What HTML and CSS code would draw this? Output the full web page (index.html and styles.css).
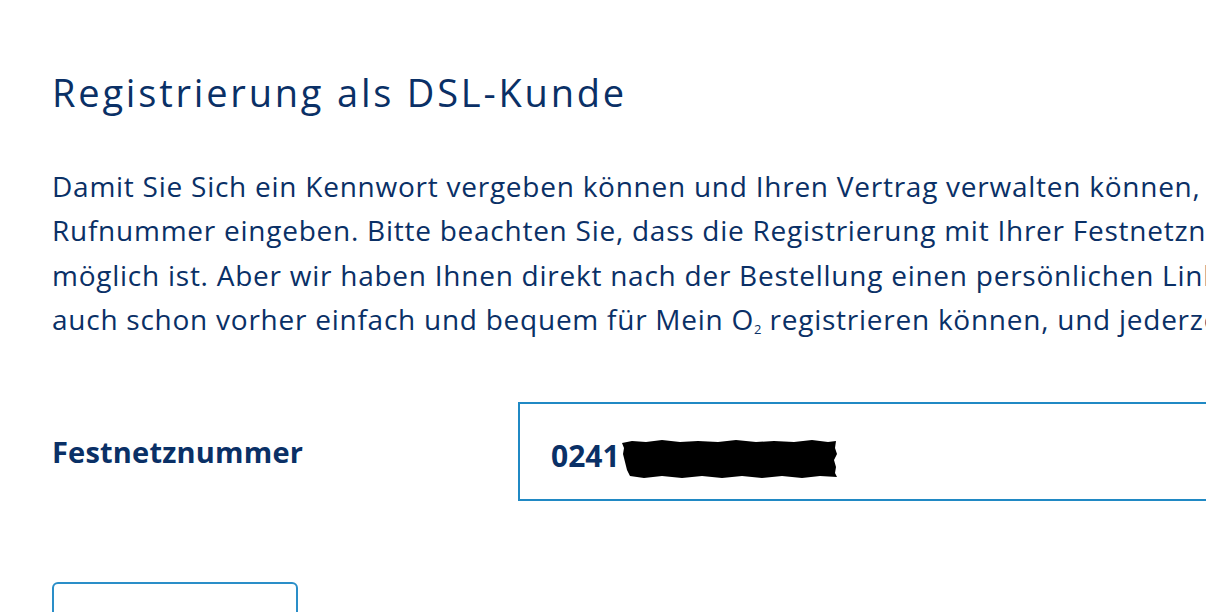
FILE: index.html
```html
<!DOCTYPE html>
<html lang="de">
<head>
    <meta charset="UTF-8">
    <title>Registrierung als DSL-Kunde</title>
    <link rel="stylesheet" href="styles.css">
</head>
<body>
    <div class="register">
        <h1>Registrierung als DSL-Kunde</h1>
        <p class="intro">
            <span class="line">Damit Sie Sich ein Kennwort vergeben können und Ihren Vertrag verwalten können,</span>
            <span class="line">Rufnummer eingeben. Bitte beachten Sie, dass die Registrierung mit Ihrer Festnetznummer</span>
            <span class="line">möglich ist. Aber wir haben Ihnen direkt nach der Bestellung einen persönlichen Link</span>
            <span class="line">auch schon vorher einfach und bequem für Mein O<sub>2</sub> registrieren können, und jederzeit</span>
        </p>

        <div class="form-row">
            <label for="phone">Festnetznummer</label>
            <div class="field">
                <span class="value">0241</span>
                <svg class="redact" width="216" height="38" viewBox="0 0 216 38">
                    <polygon points="0,3 10,1 24,2 40,0 58,2 76,1 96,2 114,0 134,2 152,1 172,2 190,0 206,2 214,1 213,8 215,14 212,20 214,27 213,33 215,37 198,36 180,38 160,36 140,38 120,36 100,38 80,36 60,38 40,36 22,38 8,36 5,30 3,22 1,14 2,8"/>
                </svg>
            </div>
        </div>

        <div class="actions">
            <button type="button" class="btn-secondary"></button>
        </div>
    </div>
</body>
</html>
```

FILE: styles.css
```css
html, body {
    margin: 0;
    padding: 0;
    overflow: hidden;
}
body {
    background: #fff;
    color: #0a3066;
    font-family: "Open Sans", Lato, sans-serif;
}
.register {
    padding: 65px 0 0 52px;
    width: 1400px;
}
h1 {
    font-weight: 400;
    font-size: 38px;
    line-height: 54px;
    letter-spacing: 2.8px;
    margin: 0 0 45px;
}
.intro {
    margin: 0;
    font-size: 28px;
    line-height: 44.3px;
    letter-spacing: 0.75px;
}
.intro .line {
    display: block;
    white-space: nowrap;
}
.intro sub {
    font-size: 13px;
    vertical-align: -4px;
    line-height: 0;
    letter-spacing: 0;
}
.form-row {
    display: flex;
    align-items: flex-start;
    margin-top: 61px;
}
.form-row label {
    width: 466px;
    flex-shrink: 0;
    margin-top: 30px;
    font-size: 29px;
    line-height: 40px;
    font-weight: 700;
    letter-spacing: 0.2px;
}
.field {
    display: flex;
    align-items: flex-start;
    width: 800px;
    height: 99px;
    border: 2px solid #2089c4;
    padding: 32px 0 0 31px;
    box-sizing: border-box;
}
.field .value {
    font-size: 30px;
    line-height: 40px;
    font-weight: 700;
}
.redact {
    margin: 4px 0 0 2px;
}
.actions {
    margin-top: 81px;
}
.btn-secondary {
    width: 246px;
    height: 60px;
    background: #fff;
    border: 2px solid #2a8ec8;
    border-radius: 6px;
    padding: 0;
}
```
